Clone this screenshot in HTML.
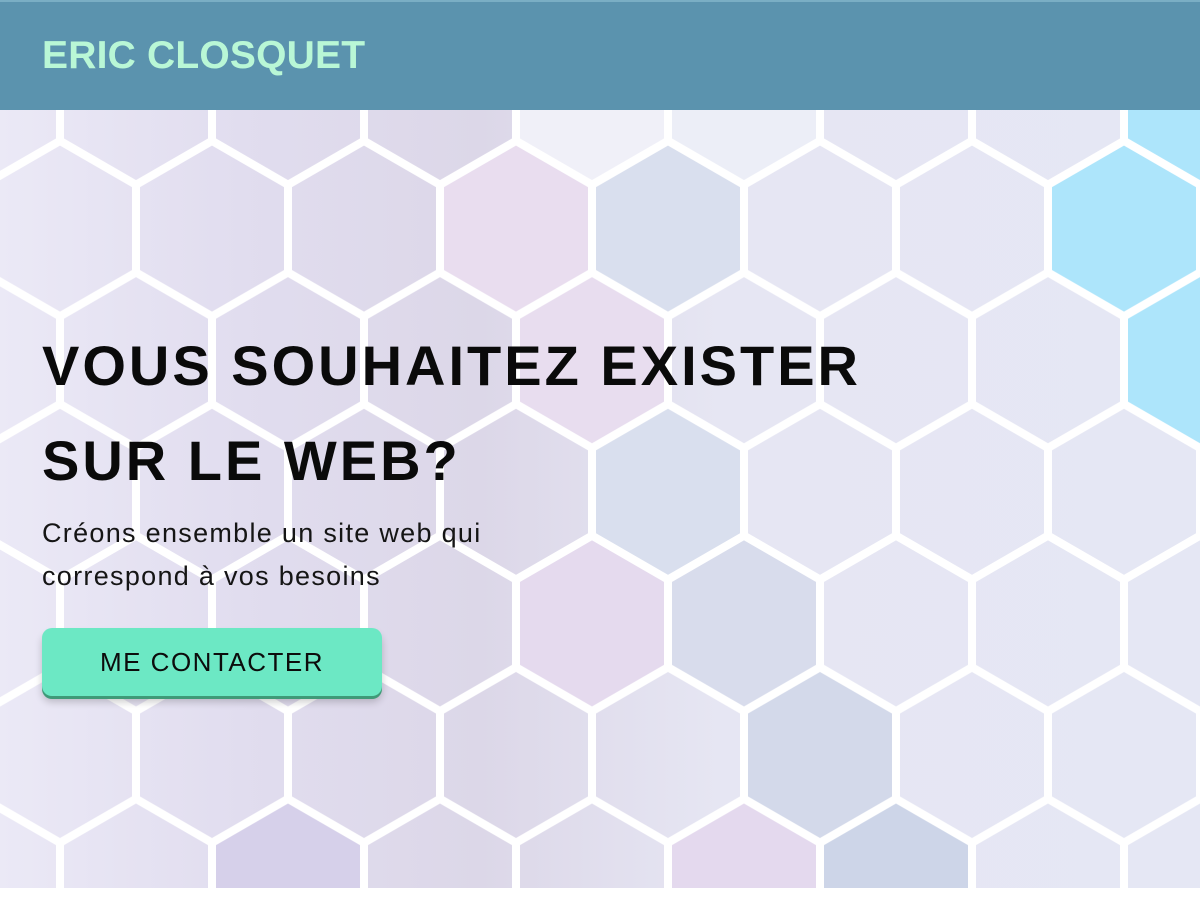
<!DOCTYPE html>
<html><head><meta charset="utf-8">
<style>
html,body{margin:0;padding:0;width:1200px;height:900px;overflow:hidden;background:#fff;font-family:"Liberation Sans",sans-serif;}
.hdr{position:absolute;left:0;top:0;width:1200px;height:110px;background:#5b93ae;border-top:2px solid #7aaec4;box-sizing:border-box;}
.logo{position:absolute;left:42px;top:32px;font-size:39px;font-weight:bold;color:#b9f7d6;letter-spacing:0.2px;}
svg.bg{position:absolute;left:0;top:110px;}
h1{position:absolute;left:42px;top:318px;margin:0;font-size:56px;line-height:95px;font-weight:bold;color:#0a0a0a;letter-spacing:3px;}
.sub{position:absolute;left:42px;top:512px;font-size:27px;line-height:43px;color:#151515;letter-spacing:1.3px;}
.btn{position:absolute;left:42px;top:628px;width:340px;height:68px;background:#6ce8c4;border-radius:10px;box-shadow:0 3px 0 #3f9a78,0 6px 8px rgba(0,0,0,0.2);text-align:center;line-height:68px;font-size:26px;color:#0c0c0c;letter-spacing:1.5px;}
</style></head><body>
<svg class="bg" width="1200" height="778" viewBox="0 110 1200 778">
<defs>
<linearGradient id="g" x1="0" x2="1" y1="0" y2="0">
<stop offset="0" stop-color="#ebe9f6"/>
<stop offset="0.2" stop-color="#e1ddef"/>
<stop offset="0.4" stop-color="#dcd7e8"/>
<stop offset="0.6" stop-color="#e6e6f3"/>
<stop offset="1" stop-color="#e5e7f4"/>
</linearGradient>
<path id="h" d="M0,-87.76 L76,-43.88 L76,43.88 L0,87.76 L-76,43.88 L-76,-43.88Z"/>
<pattern id="p" patternUnits="userSpaceOnUse" width="152" height="263.2" patternTransform="translate(136,97)">
<g fill="none" stroke="#fff" stroke-width="8">
<path d="M0,-87.76 L76,-43.88 L76,43.88 L0,87.76 L-76,43.88 L-76,-43.88Z"/>
<path d="M152,-87.76 L228,-43.88 L228,43.88 L152,87.76 L76,43.88 L76,-43.88Z"/>
<path d="M76,43.84 L152,87.72 L152,175.48 L76,219.36 L0,175.48 L0,87.72Z"/>
<path d="M0,175.44 L76,219.32 L76,307.08 L0,350.96 L-76,307.08 L-76,219.32Z"/>
<path d="M152,175.44 L228,219.32 L228,307.08 L152,350.96 L76,307.08 L76,219.32Z"/>
</g>
</pattern>
</defs>
<rect x="0" y="110" width="1200" height="778" fill="url(#g)"/>
<use href="#h" x="592" y="97" fill="#f0f0f8"/>
<use href="#h" x="744" y="97" fill="#eceef7"/>
<use href="#h" x="1200" y="97" fill="#ade5fb"/>
<use href="#h" x="516" y="229" fill="#e9ddef"/>
<use href="#h" x="668" y="229" fill="#d9dfee"/>
<use href="#h" x="1124" y="229" fill="#ade5fb"/>
<use href="#h" x="1200" y="361" fill="#ade5fb"/>
<use href="#h" x="592" y="361" fill="#e8ddef"/>
<use href="#h" x="668" y="492" fill="#d9dfee"/>
<use href="#h" x="592" y="624" fill="#e5daee"/>
<use href="#h" x="744" y="624" fill="#d8dcec"/>
<use href="#h" x="820" y="755" fill="#d3d9ea"/>
<use href="#h" x="744" y="887" fill="#e4d9ee"/>
<use href="#h" x="896" y="887" fill="#cdd5e8"/>
<use href="#h" x="288" y="887" fill="#d6d0ea"/>
<rect x="0" y="110" width="1200" height="778" fill="url(#p)"/>
</svg>
<div class="hdr"><div class="logo">ERIC CLOSQUET</div></div>
<h1>VOUS SOUHAITEZ EXISTER<br>SUR LE WEB?</h1>
<div class="sub">Créons ensemble un site web qui<br>correspond à vos besoins</div>
<div class="btn">ME CONTACTER</div>
</body></html>
